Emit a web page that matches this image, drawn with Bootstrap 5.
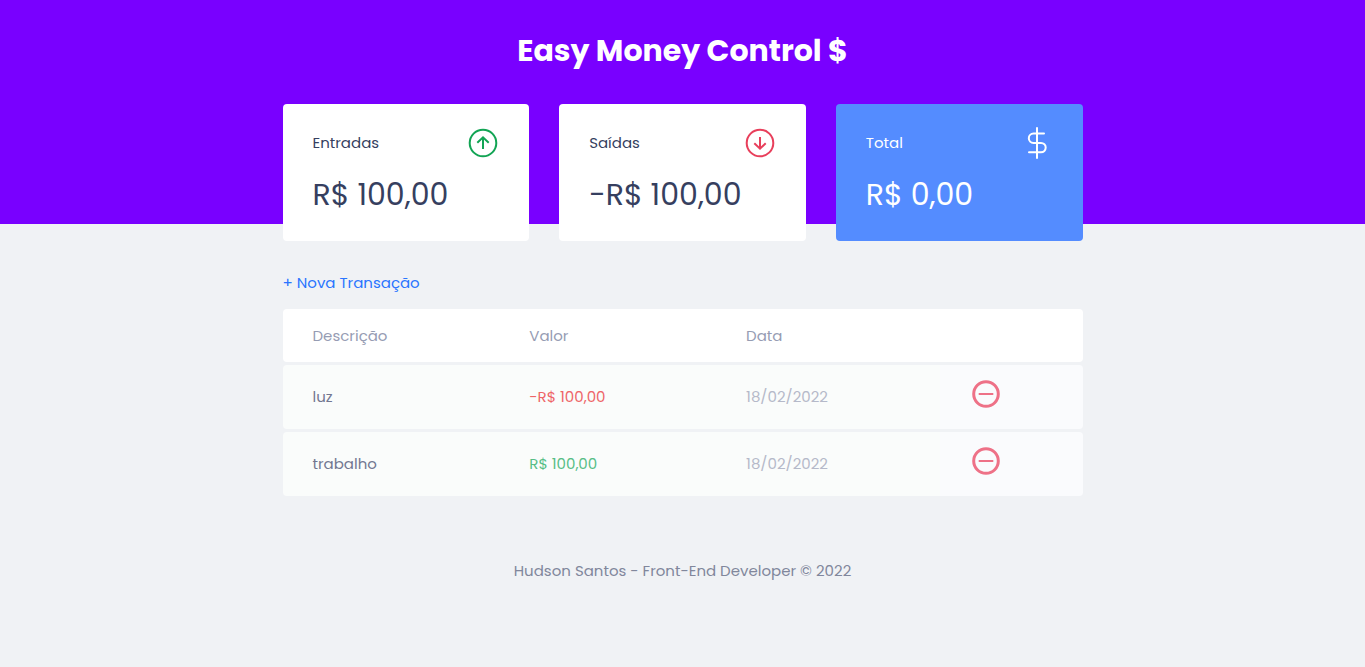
<!DOCTYPE html>
<html lang="pt-BR">
<head>
<meta charset="utf-8">
<meta name="viewport" content="width=device-width, initial-scale=1">
<title>Easy Money Control $</title>
<link href="https://cdn.jsdelivr.net/npm/bootstrap@5.3.0/dist/css/bootstrap.min.css" rel="stylesheet">
<style>
  body { background: #f0f2f5; color: #363f5f; font: 15px/22px "Poppins", "Inter", sans-serif; }
  .page-head { background: #7900ff; padding: 28px 0 151px; }
  .page-head h1 { font-size: 30px; line-height: 45px; }
  .wrap { max-width: 800px; width: 92%; }
  .summary { margin-top: -120px; gap: 30px; }
  .money-card { padding: 23px 30px 22px; border-radius: 4px; background: #fff; min-width: 0; }
  .money-card.sum { background: #548cff; color: #fff; }
  .money-card h2 { font-size: 15px; line-height: 22px; font-weight: 400; }
  .amount { font-size: 30px; line-height: 48px; margin: 12px 0 0; }
  .new-link { color: #2a75ff; margin: 31px 0 12px; }
  .entries { border-collapse: separate; border-spacing: 0 3px; table-layout: fixed; }
  .entries th { background: #fff; color: #969cb3; font-weight: 400; padding: 16px 30px 15px; }
  .entries td { background: #fafcfb; color: #727791; padding: 21px 30px; height: 64px; }
  .entries th:first-child, .entries td:first-child { border-radius: 4px 0 0 4px; }
  .entries th:last-child, .entries td:last-child { border-radius: 0 4px 4px 0; }
  .entries td.income { color: #57be86; }
  .entries td.expense { color: #ee6568; }
  .entries td.date { color: #b5b9c9; }
  .entries td.action { background: #fafbfd; padding: 13px 30px 19px; }
  .col-text { width: 27.1%; }
  .col-date { width: 28%; }
  .page-foot { color: #81879c; padding: 61px 0 40px; }
</style>
<script src="https://cdn.jsdelivr.net/npm/bootstrap@5.3.0/dist/js/bootstrap.bundle.min.js"></script>
</head>
<body>
<header class="page-head text-center text-white">
  <h1 class="fw-bold m-0">Easy Money Control $</h1>
</header>

<main class="wrap mx-auto">
  <section class="summary d-flex flex-column flex-md-row" aria-label="Balanço">
    <div class="money-card flex-fill w-100">
      <div class="d-flex justify-content-between align-items-center">
        <h2 class="m-0">Entradas</h2>
        <svg width="32" height="32" viewBox="0 0 32 32" fill="none" stroke="#12a454" stroke-width="2" aria-hidden="true"><circle cx="16" cy="16" r="13.3"/><path d="M16 22V10.5M10.3 15.7L16 10.3l5.700 5.400"/></svg>
      </div>
      <p class="amount">R$ 100,00</p>
    </div>
    <div class="money-card flex-fill w-100">
      <div class="d-flex justify-content-between align-items-center">
        <h2 class="m-0">Saídas</h2>
        <svg width="32" height="32" viewBox="0 0 32 32" fill="none" stroke="#e83f5b" stroke-width="2" aria-hidden="true"><circle cx="16" cy="16" r="13.3"/><path d="M16 10v11.500M10.300 16.300l5.700 5.400 5.700-5.400"/></svg>
      </div>
      <p class="amount">-R$ 100,00</p>
    </div>
    <div class="money-card sum flex-fill w-100">
      <div class="d-flex justify-content-between align-items-center">
        <h2 class="m-0">Total</h2>
        <svg width="32" height="32" viewBox="0 0 32 32" fill="none" stroke="#fff" stroke-width="2" stroke-linecap="round" aria-hidden="true"><path d="M16 1v30M23 6.500H12.500a4.700 4.700 0 0 0 0 9.400H20a4.700 4.700 0 0 1 0 9.400H8"/></svg>
      </div>
      <p class="amount">R$ 0,00</p>
    </div>
  </section>

  <section>
    <a href="#" class="new-link d-inline-block text-decoration-none">+ Nova Transação</a>
    <table class="entries w-100">
      <colgroup><col class="col-text"><col class="col-text"><col class="col-date"><col></colgroup>
      <thead>
        <tr><th scope="col">Descrição</th><th scope="col">Valor</th><th scope="col">Data</th><th></th></tr>
      </thead>
      <tbody>
        <tr>
          <td>luz</td><td class="expense">-R$ 100,00</td><td class="date">18/02/2022</td>
          <td class="action"><button type="button" class="d-block border-0 bg-transparent p-0" aria-label="Remover luz"><svg class="d-block" width="32" height="32" viewBox="0 0 32 32" fill="none" stroke="#ee7187" aria-hidden="true"><circle cx="16" cy="16" r="12.3" stroke-width="3"/><path d="M8.700 16h14.600" stroke-width="2"/></svg></button></td>
        </tr>
        <tr>
          <td>trabalho</td><td class="income">R$ 100,00</td><td class="date">18/02/2022</td>
          <td class="action"><button type="button" class="d-block border-0 bg-transparent p-0" aria-label="Remover trabalho"><svg class="d-block" width="32" height="32" viewBox="0 0 32 32" fill="none" stroke="#ee7187" aria-hidden="true"><circle cx="16" cy="16" r="12.3" stroke-width="3"/><path d="M8.700 16h14.600" stroke-width="2"/></svg></button></td>
        </tr>
      </tbody>
    </table>
  </section>
</main>

<footer class="page-foot text-center">Hudson Santos - Front-End Developer © 2022</footer>
</body>
</html>
